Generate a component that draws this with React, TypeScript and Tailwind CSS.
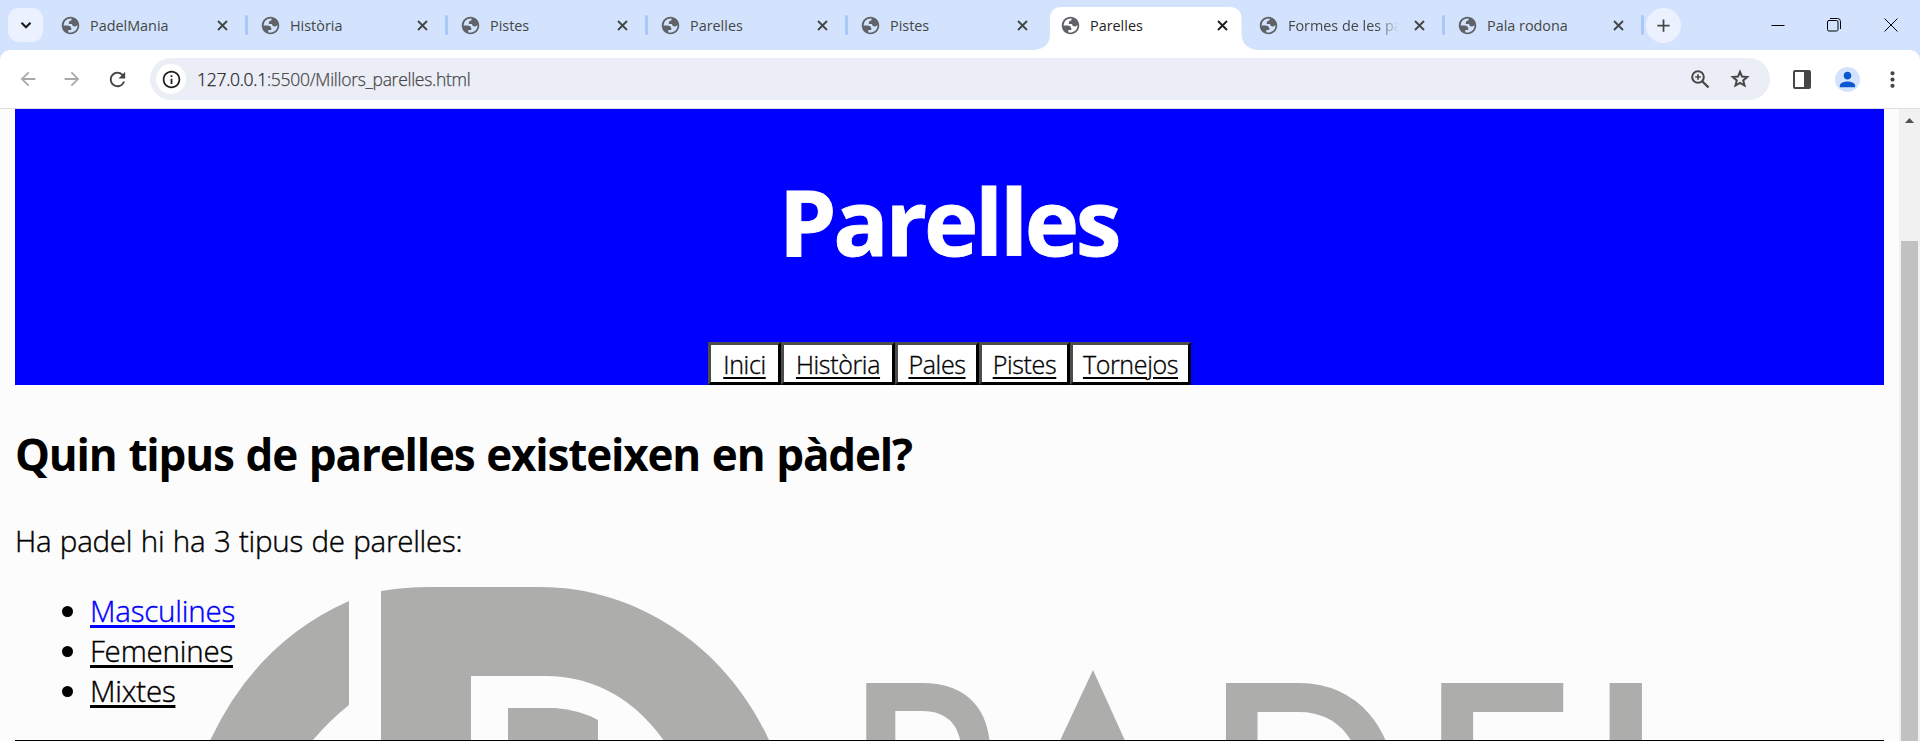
import React from "react";
import { MdArrowBack, MdArrowForward, MdRefresh, MdPerson, MdMoreVert, MdAdd, MdInfoOutline } from "react-icons/md";

const tabs = [
  { title: "PadelMania" },
  { title: "Història" },
  { title: "Pistes" },
  { title: "Parelles" },
  { title: "Pistes" },
  { title: "Parelles", active: true },
  { title: "Formes de les pa", fade: true },
  { title: "Pala rodona" },
];

function Globe() {
  return (
    <svg className="size-[21px] shrink-0 text-[#5f6368]" viewBox="0 0 24 24" fill="currentColor">
      <path
        fillRule="evenodd"
        d="M12 2C6.48 2 2 6.48 2 12s4.48 10 10 10 10-4.48 10-10S17.52 2 12 2ZM4 12h4.4c3.407.022 4.922 1.73 4.543 5.127H9.488v2.47a8.004 8.004 0 0 0 10.498-8.083C19.327 12.504 18.332 13 17 13c-2.137 0-3.206-.916-3.206-2.75h-3.748c-.274-2.728.683-4.092 2.87-4.092 0-.975.327-1.597.811-1.97A8 8 0 0 0 4 12Z"
      />
    </svg>
  );
}

function Tab({ title, active, fade, index }: { title: string; active?: boolean; fade?: boolean; index: number }) {
  return (
    <div className={`relative flex h-[50px] items-center ${index > 5 ? "w-[199px]" : index === 5 ? "w-[198px]" : "w-[200px]"}`}>
      {active && (
        <svg className="absolute top-[7px] left-[-13px] h-[43px] w-[222px]" viewBox="0 0 222 43" fill="#fff">
          <path d="M0 43 Q15 41 15 27 V12 Q15 0 27 0 H194 Q206.500 0 206.500 12 V27 Q207 41 222 43 Z" />
        </svg>
      )}
      <div className="relative flex w-full items-center pl-[12px]">
        <Globe />
        <span
          className={`ml-[9px] w-[112px] overflow-hidden pt-[2px] text-[14.4px] leading-[20px] whitespace-nowrap ${active ? "text-[#1f1f1f]" : "text-[#454746]"} ${fade ? "[mask-image:linear-gradient(to_right,#000_80%,transparent)]" : ""}`}
        >
          {title}
        </span>
        <svg
          className={`ml-[15px] size-[11px] shrink-0 ${active ? "text-[#1f1f1f]" : "text-[#454746]"}`}
          viewBox="0 0 11 11"
          stroke="currentColor"
          strokeWidth="1.900"
        >
          <path d="M1 1 L10 10 M10 1 L1 10" />
        </svg>
        {index !== 4 && !active && <span className="ml-[17px] h-[20px] w-[3px] shrink-0 rounded bg-[#a8c7fa]" />}
      </div>
    </div>
  );
}

const links = [
  { label: "Inici", box: "w-[73px]" },
  { label: "Història", box: "w-[114px]" },
  { label: "Pales", box: "w-[84px]" },
  { label: "Pistes", box: "w-[91px]" },
  { label: "Tornejos", box: "w-[121px]" },
];

function Watermark() {
  return (
    <svg className="absolute top-0 left-0 h-[632px] w-[1899px] blur-[0.7px]" viewBox="0 109 1899 632" fill="#adadab">
      <path d="M349 601 V705 Q330 720 313 740 V745 H208 Q254 643 349 601 Z" />
      <path d="M381 591 Q405 587 430 587 H540 C640 587 728 650 769 740 V745 H667 C640 705 600 676 545 676 H471 V745 H381 Z" />
      <path d="M508 708 H555 Q580 710 598 720 V745 H508 Z" />
      <g fontFamily="Lato" fontWeight="600" fontSize="307">
        <text transform="translate(845 904) scale(0.81 1)">P</text>
        <text transform="translate(1008 940) scale(0.8 1)">A</text>
        <text transform="translate(1203 904) scale(0.875 1)">D</text>
        <text transform="translate(1418 904) scale(0.885 1)">E</text>
        <text transform="translate(1586 904) scale(0.9 1)">L</text>
      </g>
      <path d="M1093 670 L1127 745 H1058 Z" />
    </svg>
  );
}

export default function App() {
  return (
    <div className="flex h-[741px] w-[1920px] flex-col overflow-hidden bg-white font-['Open_Sans','Noto_Sans',sans-serif] text-black">
      <div className="flex h-[50px] shrink-0 items-center bg-[#d3e3fd]">
        <div className="ml-[8px] flex h-[34px] w-[35px] items-center justify-center rounded-[11px] bg-[#ebf1fe]">
          <svg className="size-[12px]" viewBox="0 0 12 12" fill="none" stroke="#1f1f1f" strokeWidth="2.300">
            <path d="M1.500 3.800 L6 8.200 L10.500 3.800" />
          </svg>
        </div>
        <div className="ml-[5px] flex">
          {tabs.map((tab, i) => (
            <Tab key={i} index={i} {...tab} />
          ))}
        </div>
        <div className="ml-[2px] flex size-[35px] items-center justify-center rounded-full bg-[#ebf1fe]">
          <MdAdd className="size-[21px] text-[#454746]" />
        </div>
        <div className="ml-auto flex items-center pr-[22px]">
          <svg className="h-[14px] w-[14px]" viewBox="0 0 14 14" stroke="#000">
            <path d="M0.500 7.500 H13.500" />
          </svg>
          <svg className="ml-[42px] size-[14px]" viewBox="0 0 14 14" fill="none" stroke="#000">
            <rect x="0.500" y="2.500" width="10.500" height="10.500" rx="1.500" />
            <path d="M3 0.500 H10.500 Q13.500 0.500 13.500 3.500 V11" />
          </svg>
          <svg className="ml-[43px] size-[14px]" viewBox="0 0 14 14" stroke="#000">
            <path d="M0.500 0.500 L13.500 13.500 M13.500 0.500 L0.500 13.500" />
          </svg>
        </div>
      </div>

      <div className="shrink-0 bg-[#d3e3fd]">
        <div className="flex h-[59px] items-center rounded-t-[10px] border-b border-[#dedede] bg-white">
          <MdArrowBack className="ml-[17px] size-[22px] text-[#a9a9a9]" />
          <MdArrowForward className="ml-[22px] size-[22px] text-[#a9a9a9]" />
          <MdRefresh className="ml-[23px] size-[23px] text-[#454746]" />
          <div className="ml-[21px] flex h-[42px] w-[1620px] items-center rounded-full bg-[#ebeef7]">
            <div className="ml-[6px] flex size-[30px] items-center justify-center rounded-full bg-white">
              <MdInfoOutline className="size-[21px] text-[#1f1f1f]" />
            </div>
            <span className="ml-[11px] text-[17.5px] font-light tracking-[-0.28px] text-[#474747] [-webkit-text-stroke:0.25px]">
              <span className="text-[#1f1f1f]">127.0.0.1</span>:5500/Millors_parelles.html
            </span>
            <svg className="ml-auto size-[20px]" viewBox="0 0 20 20" fill="none" stroke="#454746" strokeWidth="2">
              <circle cx="8" cy="8" r="5.800" />
              <path d="M12.200 12.200 L18.500 18.500" strokeWidth="2.300" />
              <path d="M8 5.200 V10.800 M5.200 8 H10.800" strokeWidth="1.600" />
            </svg>
            <svg className="mr-[20px] ml-[20px] size-[20px]" viewBox="0 0 20 20" fill="none" stroke="#454746" strokeWidth="2">
              <path d="M10 2.800 L12 7.600 L17.200 8 L13.200 11.400 L14.500 16.500 L10 13.800 L5.500 16.500 L6.800 11.400 L2.800 8 L8 7.600 Z" />
            </svg>
          </div>
          <svg className="ml-[23px] h-[19px] w-[18px]" viewBox="0 0 18 19">
            <rect x="1" y="1" width="16" height="17" rx="1" fill="none" stroke="#454746" strokeWidth="2" />
            <path d="M11 1 H17 V18 H11 Z" fill="#454746" />
          </svg>
          <div className="ml-[24px] flex size-[25px] items-center justify-center rounded-full bg-[#d3e3fd]">
            <MdPerson className="size-[23px] text-[#0b57d0]" />
          </div>
          <MdMoreVert className="ml-[20px] size-[25px] text-[#454746]" />
        </div>
      </div>

      <div className="flex min-h-0 grow">
        <main className="relative w-[1899px] bg-[#fcfcfc] px-[15px]">
          <Watermark />
          <div className="relative flex h-[632px] w-[1869px] flex-col border-b border-black">
            <header className="flex h-[276px] shrink-0 flex-col items-center justify-between bg-[#0000ff]">
              <h1 className="mt-[49px] mr-[2px] text-[92px] leading-[126px] font-bold tracking-[-3.3px] text-white [-webkit-text-stroke:0.8px]">Parelles</h1>
              <nav className="flex">
                {links.map((l) => (
                  <div
                    key={l.label}
                    className={`flex h-[43px] items-center justify-center border-[3px] border-t-[#4c4c4c] border-r-black border-b-black border-l-[#4c4c4c] bg-white ${l.box}`}
                  >
                    <a className="text-[25px] leading-[34px] font-light tracking-[-0.35px] underline decoration-2 underline-offset-[3px] [-webkit-text-stroke:0.35px]">{l.label}</a>
                  </div>
                ))}
              </nav>
            </header>
            <h2 className="mt-[37px] text-[44px] leading-[64px] font-bold tracking-[-1.2px] whitespace-nowrap [word-spacing:1.7px]">
              <span>Quin tipus de parelles existeixen en pàdel?</span>
            </h2>
            <p className="mt-[35px] text-[29.5px] leading-[40px] font-light tracking-[-0.25px] whitespace-nowrap [-webkit-text-stroke:0.4px] [word-spacing:1.1px]">
              <span>Ha padel hi ha 3 tipus de parelles:</span>
            </p>
            <ul className="mt-[30px] text-[29.5px] leading-[40px] font-light tracking-[-0.2px] [-webkit-text-stroke:0.4px]">
              {["Masculines", "Femenines", "Mixtes"].map((t, i) => (
                <li key={t} className="flex items-center">
                  <span className="ml-[47px] size-[11px] rounded-full bg-black" />
                  <a className={`ml-[17px] underline decoration-[3px] underline-offset-[3px] ${i === 0 ? "text-[#0000ff]" : ""}`}>{t}</a>
                </li>
              ))}
            </ul>
          </div>
        </main>
        <div className="flex w-[21px] flex-col items-center bg-[#f1f1f1]">
          <svg className="mt-[9px] h-[5px] w-[9px]" viewBox="0 0 9 5" fill="#505050">
            <path d="M0 5 L4.500 0 L9 5 Z" />
          </svg>
          <div className="mt-[118px] w-[17px] grow bg-[#c1c1c1]" />
        </div>
      </div>
    </div>
  );
}
